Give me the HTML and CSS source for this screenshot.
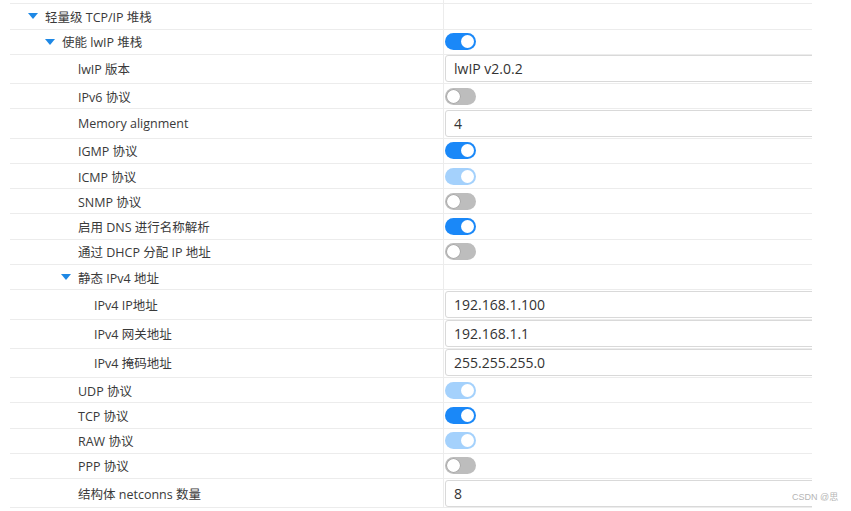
FILE: index.html
```html
<!DOCTYPE html>
<html lang="zh-CN">
<head>
<meta charset="utf-8">
<title>lwIP 配置</title>
<link rel="stylesheet" href="styles.css">
</head>
<body>
<div class="panel">
  <div class="row row-cut">
    <div class="label"></div>
    <div class="value"><span class="switch off"></span></div>
  </div>
  <div class="row">
    <div class="label l1"><span class="arrow"></span>轻量级 TCP/IP 堆栈</div>
    <div class="value"></div>
  </div>
  <div class="row">
    <div class="label l2"><span class="arrow"></span>使能 lwIP 堆栈</div>
    <div class="value"><span class="switch on"></span></div>
  </div>
  <div class="row row-input">
    <div class="label l3">lwIP 版本</div>
    <div class="value"><div class="field">lwIP v2.0.2</div></div>
  </div>
  <div class="row">
    <div class="label l3">IPv6 协议</div>
    <div class="value"><span class="switch off"></span></div>
  </div>
  <div class="row row-input">
    <div class="label l3">Memory alignment</div>
    <div class="value"><div class="field">4</div></div>
  </div>
  <div class="row">
    <div class="label l3">IGMP 协议</div>
    <div class="value"><span class="switch on"></span></div>
  </div>
  <div class="row">
    <div class="label l3">ICMP 协议</div>
    <div class="value"><span class="switch on light"></span></div>
  </div>
  <div class="row">
    <div class="label l3">SNMP 协议</div>
    <div class="value"><span class="switch off"></span></div>
  </div>
  <div class="row">
    <div class="label l3">启用 DNS 进行名称解析</div>
    <div class="value"><span class="switch on"></span></div>
  </div>
  <div class="row">
    <div class="label l3">通过 DHCP 分配 IP 地址</div>
    <div class="value"><span class="switch off"></span></div>
  </div>
  <div class="row">
    <div class="label l3a"><span class="arrow"></span>静态 IPv4 地址</div>
    <div class="value"></div>
  </div>
  <div class="row row-input">
    <div class="label l4">IPv4 IP地址</div>
    <div class="value"><div class="field">192.168.1.100</div></div>
  </div>
  <div class="row row-input">
    <div class="label l4">IPv4 网关地址</div>
    <div class="value"><div class="field">192.168.1.1</div></div>
  </div>
  <div class="row row-input">
    <div class="label l4">IPv4 掩码地址</div>
    <div class="value"><div class="field">255.255.255.0</div></div>
  </div>
  <div class="row">
    <div class="label l3">UDP 协议</div>
    <div class="value"><span class="switch on light"></span></div>
  </div>
  <div class="row">
    <div class="label l3">TCP 协议</div>
    <div class="value"><span class="switch on"></span></div>
  </div>
  <div class="row">
    <div class="label l3">RAW 协议</div>
    <div class="value"><span class="switch on light"></span></div>
  </div>
  <div class="row">
    <div class="label l3">PPP 协议</div>
    <div class="value"><span class="switch off"></span></div>
  </div>
  <div class="row row-input">
    <div class="label l3">结构体 netconns 数量</div>
    <div class="value"><div class="field">8</div></div>
  </div>
</div>
<div class="watermark">CSDN @思</div>
</body>
</html>
```

FILE: styles.css
```css
html, body {
  margin: 0;
  padding: 0;
  background: #ffffff;
}

body {
  width: 851px;
  height: 511px;
  overflow: hidden;
  position: relative;
  font-family: "Open Sans", "Noto Sans CJK SC", sans-serif;
  color: #333333;
}

.panel {
  width: 802px;
  margin-left: 10px;
  margin-top: -21px;
  overflow: hidden;
}

.row {
  display: flex;
  height: 25.3px;
  border-bottom: 1px solid #ececec;
  box-sizing: border-box;
}

.row-input {
  height: 29.2px;
}

.label {
  width: 433px;
  flex: none;
  box-sizing: border-box;
  display: flex;
  align-items: center;
  font-size: 12.5px;
  color: #3a3a3a;
  white-space: nowrap;
}

.l1 { padding-left: 18px; }
.l2 { padding-left: 35px; }
.l3 { padding-left: 68px; }
.l3a { padding-left: 51px; }
.l4 { padding-left: 84px; }

.arrow {
  width: 0;
  height: 0;
  border-left: 5px solid transparent;
  border-right: 5px solid transparent;
  border-top: 6px solid #1e88e5;
  margin-right: 7px;
}

.value {
  flex: 1;
  border-left: 1px solid #ececec;
  padding-left: 1px;
  display: flex;
  align-items: center;
  min-width: 0;
}

.switch {
  position: relative;
  width: 31px;
  height: 17px;
  border-radius: 9px;
  box-sizing: border-box;
  flex: none;
}

.switch::after {
  content: "";
  position: absolute;
  top: 2px;
  width: 13px;
  height: 13px;
  border-radius: 50%;
  background: #ffffff;
}

.switch.on {
  background: #1a88f8;
}

.switch.on::after {
  right: 2px;
}

.switch.on.light {
  background: #a4d1fc;
}

.switch.off {
  background: #bdbdbd;
}

.switch.off::after {
  left: 2px;
  box-shadow: 0 0 0 0.5px #9a9a9a;
}

.field {
  flex: none;
  width: 420px;
  height: 27px;
  border: 1px solid #d9d9d9;
  border-radius: 3px;
  box-sizing: border-box;
  padding-left: 8px;
  display: flex;
  align-items: center;
  font-size: 14px;
  color: #333333;
}

.watermark {
  position: absolute;
  left: 792px;
  top: 490px;
  font-family: "Liberation Sans", "Noto Sans CJK SC", sans-serif;
  font-size: 9px;
  color: #b5b5b5;
}
```
